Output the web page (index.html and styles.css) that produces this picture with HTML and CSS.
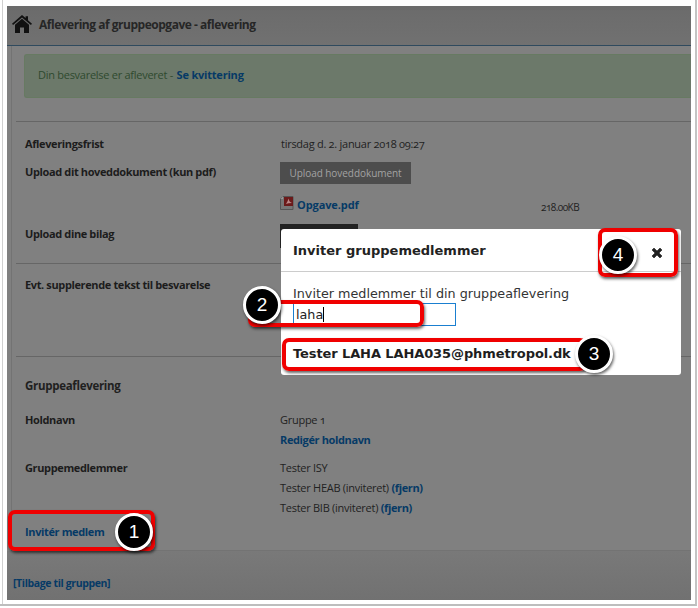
FILE: index.html
```html
<!DOCTYPE html>
<html lang="da">
<head>
<meta charset="utf-8">
<title>Aflevering af gruppeopgave</title>
<link rel="stylesheet" href="styles.css">
</head>
<body>
<div class="frame">
  <div class="page">
    <header class="head">
      <svg class="home" viewBox="0 0 20 18" width="20" height="18"><path d="M10 0 L13.6 3.1 V1.2 H16 V5.2 L20 8.7 L18.9 10 L10 2.4 L1.1 10 L0 8.7 Z M10 3.8 L17 9.8 V18 H12 V12.5 H8 V18 H3 V9.8 Z" fill="#111"/></svg>
      <h1 class="title">Aflevering af gruppeopgave - aflevering</h1>
    </header>
    <main class="content">
      <div class="alert">Din besvarelse er afleveret - <a class="link alert-link">Se kvittering</a></div>
      <hr class="rule first">
      <div class="row r-frist"><div class="label">Afleveringsfrist</div><div class="value">tirsdag d. 2. januar 2018 09:27</div></div>
      <div class="row r-upload"><div class="label">Upload dit hoveddokument (kun pdf)</div><div class="value"><span class="btn">Upload hoveddokument</span></div></div>
      <div class="row r-file"><div></div><div class="value file">
        <svg class="pdf" viewBox="0 0 14 14" width="14" height="14"><path d="M3 .5 H13 V13.5 H.5 V3 Z" fill="#777" stroke="#555"/><path d="M3 .5 V3 H.5 Z" fill="#999"/><rect x="4" y="1" width="9" height="9" fill="#6b1a1a"/><path d="M6 8 Q8 5 8.5 2.5 Q9 6 12 7 Q8 7 6 8Z" fill="#b88"/></svg>
        <a class="link fname">Opgave.pdf</a><span class="size">218.00KB</span></div></div>
      <div class="row r-bilag"><div class="label">Upload dine bilag</div><div class="value"><span class="btn dark"></span></div></div>
      <hr class="rule">
      <div class="row r-evt"><div class="label">Evt. supplerende tekst til besvarelse</div></div>
      <hr class="rule">
      <h2 class="sub">Gruppeaflevering</h2>
      <div class="row r-hold"><div class="label">Holdnavn</div><div class="value stack"><span>Gruppe 1</span><a class="link">Redigér holdnavn</a></div></div>
      <div class="row r-med"><div class="label">Gruppemedlemmer</div><div class="value stack"><span>Tester ISY</span><span>Tester HEAB (inviteret) <a class="link">(fjern)</a></span><span>Tester BIB (inviteret) <a class="link">(fjern)</a></span></div></div>
      <div class="invite"><a class="link">Invitér medlem</a></div>
    </main>
    <footer class="foot"><a class="link">[Tilbage til gruppen]</a></footer>
  </div>

  <section class="modal">
    <div class="m-head"><span class="m-title">Inviter gruppemedlemmer</span>
      <svg class="close" viewBox="0 0 12 12" width="12" height="12"><path d="M3 1 L6 4 L9 1 L11 3 L8 6 L11 9 L9 11 L6 8 L3 11 L1 9 L4 6 L1 3 Z" fill="#222" stroke="#222" stroke-width=".6" stroke-linejoin="round"/></svg>
    </div>
    <div class="m-body">
      <div class="m-text">Inviter medlemmer til din gruppeaflevering</div>
      <div class="m-input">laha<span class="caret"></span></div>
      <div class="m-result">Tester LAHA LAHA035@phmetropol.dk</div>
    </div>
  </section>

  <div class="callout c1"></div>
  <div class="callout c2"></div>
  <div class="callout c3"></div>
  <div class="callout c4"></div>
  <div class="badge b1">1</div>
  <div class="badge b2">2</div>
  <div class="badge b3">3</div>
  <div class="badge b4">4</div>
</div>
</body>
</html>
```
FILE: styles.css
```css
* { box-sizing: border-box; }
html, body { margin: 0; padding: 0; background: #fff; }
body { width: 698px; height: 608px; overflow: hidden; font-family: "Open Sans", "Noto Sans", sans-serif; }
.frame {
  position: relative;
  width: 697px;
  height: 606px;
  padding: 6px 4px 4px 7px;
  background: #fff;
  box-shadow: inset 2px 0 0 #fff, inset 3px 0 0 #d0d0d0;
  border-right: 2px solid #c4c4c4;
  border-bottom: 2px solid #bdbdbd;
}
.page {
  display: flex;
  flex-direction: column;
  width: 684px;
  height: 594px;
  background: #808080;
  color: #1f1f1f;
  font-size: 11px;
  letter-spacing: -0.27px;
  font-variant-numeric: oldstyle-nums;
}
.head {
  display: flex;
  align-items: center;
  gap: 7px;
  height: 40px;
  padding: 0 0 2px 5px;
  background: linear-gradient(#6b6b6b, #717171);
  border-bottom: 1px solid #2f4a5e;
}
.home { margin-top: -2px; }
.title { margin: 0; font-size: 12px; font-weight: 700; color: #262626; letter-spacing: -0.48px; }
.content {
  flex: 1;
  padding: 8px 0 0 0;
  margin-left: 4px;
  border-left: 1px solid #737373;
  border-bottom: 1px solid #737373;
}
.alert {
  height: 44px;
  margin-left: 12px;
  padding: 0 0 4px 13px;
  display: flex;
  align-items: center;
  white-space: pre;
  background: #6c796a;
  border: 1px solid #677a62;
  border-right: 0;
  border-radius: 3px 0 0 3px;
  color: #2f4a2f;
  font-size: 11px;
}
.link { color: #063a66; font-weight: 700; letter-spacing: -0.37px; }
.alert-link { margin-left: 1px; letter-spacing: -0.2px; }
.rule { height: 1px; margin: 0 0 0 4px; border: 0; background: #666; }
.rule.first { margin-top: 23px; }
.row { display: grid; grid-template-columns: 256px 1fr; padding-left: 13px; }
.label { font-weight: 700; color: #1c1c1c; letter-spacing: -0.37px; }
.value { color: #222; }
.r-frist { padding-top: 14px; height: 36px; }
.r-upload { height: 34px; }
.r-upload .label { padding-top: 6px; }
.btn {
  display: block;
  width: 131px;
  height: 22px;
  margin-left: -1px;
  margin-top: 4px;
  background: #4d4d4d;
  color: #a3a3a3;
  font-size: 10px;
  letter-spacing: -0.05px;
  line-height: 23px;
  text-align: center;
}
.btn.dark { width: 78px; background: #222; height: 24px; margin-top: 3px; }
.r-file { height: 29px; }
.file { position: relative; display: flex; align-items: flex-start; padding-top: 5px; }
.pdf { margin: -1px 3px 0 -1px; }
.fname { letter-spacing: -0.1px; }
.size { position: absolute; left: 260px; top: 8px; font-size: 10px; color: #222; letter-spacing: -0.55px; }
.r-bilag { height: 42px; }
.r-bilag .label { padding-top: 5px; }
.r-evt { height: 92px; padding-top: 13px; }
.r-evt .label { grid-column: 1 / 3; }
.sub { margin: 21px 0 0 13px; height: 34px; font-size: 11.5px; font-weight: 700; color: #1f1f1f; letter-spacing: -0.3px; }
.r-hold { height: 48px; }
.stack { display: flex; flex-direction: column; gap: 5px; margin-left: -1px; }
.stack > * { display: block; line-height: 15px; }
.r-med { height: 64px; }
.invite { padding: 0 0 0 13px; }
.foot {
  height: 49px;
  padding: 25px 0 0 6px;
  background: linear-gradient(#797979, #717171);
  font-size: 10.5px;
}
.modal {
  position: absolute;
  left: 281px;
  top: 229px;
  width: 400px;
  height: 146px;
  background: #fff;
  border-radius: 3px;
  font-family: "DejaVu Sans", Verdana, sans-serif;
  color: #222;
}
.m-head {
  display: flex;
  justify-content: space-between;
  align-items: center;
  height: 43px;
  padding: 0 18px 0 12px;
  border-bottom: 1px solid #ccc;
}
.m-title { font-size: 13px; font-weight: 700; }
.close { margin-top: 5px; }
.m-body { padding: 14px 12px 0; }
.m-text { font-size: 12.75px; line-height: 16px; color: #333; }
.m-input {
  display: flex;
  align-items: center;
  width: 163px;
  height: 23px;
  margin-top: 1px;
  padding-left: 2px;
  border: 1px solid #1a7fd0;
  font-size: 12.75px;
}
.caret { width: 1px; height: 15px; background: #000; }
.m-result { margin-top: 20px; font-size: 13px; font-weight: 700; line-height: 16px; color: #1e1e1e; letter-spacing: -0.1px; }
.callout {
  position: absolute;
  border: 4px solid #f00000;
  border-radius: 7px;
  box-shadow: 1px 2px 3px rgba(0,0,0,.6);
}
.c1 { left: 8px; top: 510px; width: 147px; height: 41px; }
.c2 { left: 248px; top: 300px; width: 176px; height: 27px; }
.c3 { left: 282px; top: 338px; width: 305px; height: 33px; }
.c4 { left: 598px; top: 228px; width: 80px; height: 49px; }
.badge {
  position: absolute;
  display: flex;
  align-items: center;
  justify-content: center;
  width: 38px;
  height: 38px;
  border: 3px solid #fff;
  border-radius: 50%;
  background: #000;
  color: #fff;
  font-family: "Liberation Sans", Arial, sans-serif;
  font-size: 19px;
  box-shadow: 1px 2px 3px rgba(0,0,0,.6);
}
.b1 { left: 115px; top: 513px; }
.b2 { left: 243px; top: 286px; }
.b3 { left: 575px; top: 335px; }
.b4 { left: 599px; top: 236px; }
```
